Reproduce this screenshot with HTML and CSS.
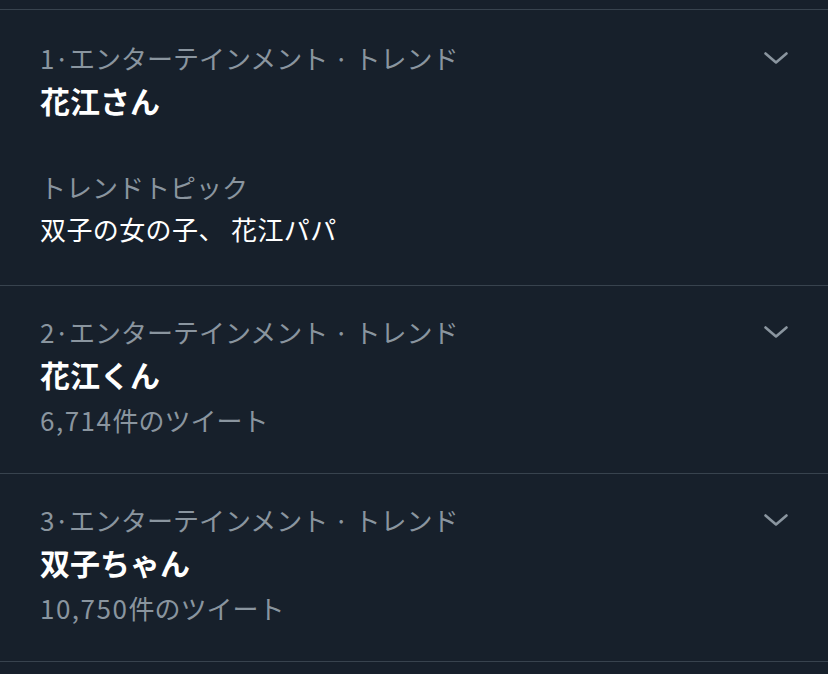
FILE: index.html
```html
<!DOCTYPE html>
<html>
<head>
    <meta charset="utf-8" />
    <title>トレンド</title>
    <link rel="stylesheet" href="styles.css">
</head>
<body>
    <div class="list">
        <!-- 1位 -->
        <div class="trend first">
            <div class="info">
                <div class="meta">1·エンターテインメント · トレンド</div>
                <div class="name">花江さん</div>
                <div class="topic-label">トレンドトピック</div>
                <div class="topic">双子の女の子、 花江パパ</div>
            </div>
            <div class="more">
                <svg viewBox="0 0 24 12" width="24" height="12"><polyline points="1.5,1.5 12,10.5 22.5,1.5" /></svg>
            </div>
        </div>
        <!-- 2位 -->
        <div class="trend">
            <div class="info">
                <div class="meta">2·エンターテインメント · トレンド</div>
                <div class="name">花江くん</div>
                <div class="count"><span class="num">6,714</span>件のツイート</div>
            </div>
            <div class="more">
                <svg viewBox="0 0 24 12" width="24" height="12"><polyline points="1.5,1.5 12,10.5 22.5,1.5" /></svg>
            </div>
        </div>
        <!-- 3位 -->
        <div class="trend">
            <div class="info">
                <div class="meta">3·エンターテインメント · トレンド</div>
                <div class="name">双子ちゃん</div>
                <div class="count"><span class="num">10,750</span>件のツイート</div>
            </div>
            <div class="more">
                <svg viewBox="0 0 24 12" width="24" height="12"><polyline points="1.5,1.5 12,10.5 22.5,1.5" /></svg>
            </div>
        </div>
    </div>
</body>
</html>
```

FILE: styles.css
```css
/*清除边距*/
html, body{
    margin: 0;
    padding: 0;
}
body{
    background-color: #17202b;
    font-family: "Noto Sans CJK JP", "Noto Sans", sans-serif;
    color: #fff;
}
/*列表*/
.list{
    padding-top: 9px;
}
.trend{
    display: flex;
    justify-content: space-between;
    align-items: flex-start;
    border-top: 1px solid #38434e;
    padding: 28px 40px 35px 40px;
}
.trend.first{
    padding-top: 30px;
    padding-bottom: 38px;
}
.trend:last-child{
    border-bottom: 1px solid #38434e;
}
/*分类*/
.meta{
    font-size: 26px;
    line-height: 36px;
    color: #8a959f;
}
/*标题*/
.name{
    font-size: 30px;
    line-height: 40px;
    font-weight: bold;
    margin-top: 4px;
}
.topic-label{
    font-size: 26px;
    line-height: 36px;
    color: #8a959f;
    margin-top: 49px;
}
.topic{
    font-size: 26px;
    line-height: 36px;
    margin-top: 6px;
    letter-spacing: 0.4px;
}
.count{
    font-size: 26px;
    line-height: 36px;
    color: #8a959f;
    margin-top: 8px;
}
/*数字稍宽一点*/
.count .num{
    letter-spacing: 1.5px;
}
/*下拉箭头*/
.more{
    padding-top: 12px;
}
.more svg{
    display: block;
    fill: none;
    stroke: #8a959f;
    stroke-width: 2.6;
    stroke-linecap: round;
    stroke-linejoin: round;
}
```
